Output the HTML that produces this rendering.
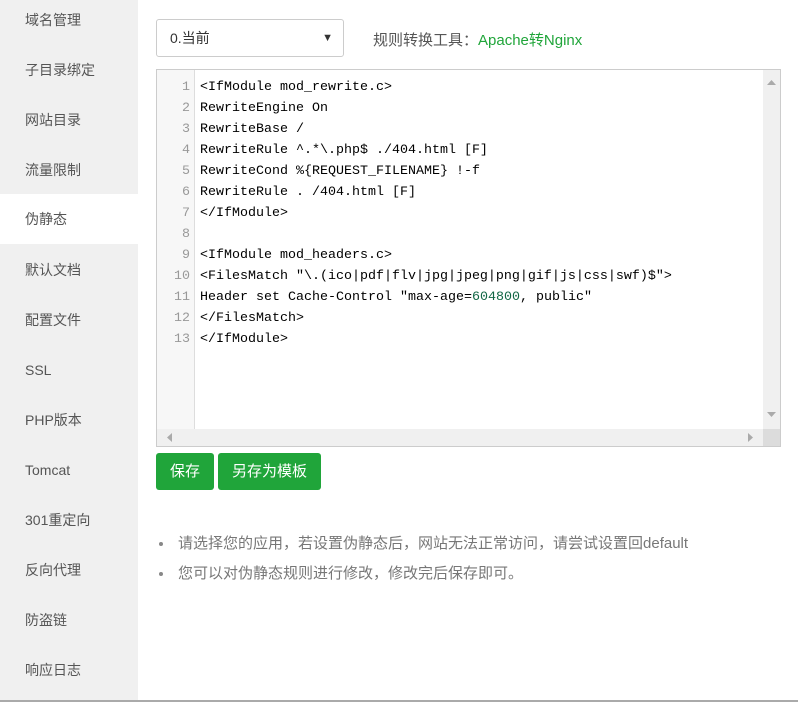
<!DOCTYPE html>
<html><head><meta charset="utf-8"><style>
*{margin:0;padding:0;box-sizing:border-box}
body{width:798px;height:702px;background:#fff;font-family:"Liberation Sans","Noto Sans CJK SC",sans-serif;position:relative;overflow:hidden}
.side{position:absolute;left:0;top:0;width:138px;height:700px;background:#f0f0f0}
.side div{position:absolute;left:0;width:138px;height:50px;line-height:50px;padding-left:25px;font-size:14px;color:#555}
.side div.act{background:#fff}
.bl{position:absolute;left:0;top:700px;width:798px;height:2px;background:#aaa}
.sel{position:absolute;left:156px;top:19px;width:188px;height:38px;border:1px solid #ccc;border-radius:3px;font-size:14px;color:#333;line-height:36px;padding-left:13px}
.sel span{position:absolute;right:10px;top:0;font-size:11px}
.tool{position:absolute;left:373px;top:29px;font-size:15px;color:#555}
.tool b{font-weight:normal;color:#20a53a}
.ed{position:absolute;left:156px;top:69px;width:625px;height:378px;border:1px solid #ccc;background:#fff}
.gut{position:absolute;left:0;top:0;width:38px;height:360px;background:#f7f7f7;border-right:1px solid #ddd}
.ln{position:absolute;left:0;width:33px;text-align:right;font:13.33px/21px "Liberation Mono",monospace;color:#999}
.cd{position:absolute;left:43px;top:7px;font:13.33px/21px "Liberation Mono",monospace;color:#000;white-space:pre}
.vs{position:absolute;right:0;top:0;width:17px;height:360px;background:#f0f0f0}
.hs{position:absolute;left:0;bottom:0;width:607px;height:17px;background:#f0f0f0}
.cr{position:absolute;right:0;bottom:0;width:17px;height:17px;background:#dcdcdc}
.btn{position:absolute;top:453px;height:37px;background:#20a53a;color:#fff;font-size:15px;line-height:37px;text-align:center;border-radius:3px}
.tips{position:absolute;left:156px;top:533px;font-size:15px;color:#777}
.tips div{height:30px;line-height:22px;position:relative;padding-left:22px}
.tips div:before{content:"";position:absolute;left:3px;top:9px;width:4px;height:4px;border-radius:50%;background:#888}
</style></head><body>
<div class="side">
<div style="top:-5px">域名管理</div>
<div style="top:45px">子目录绑定</div>
<div style="top:95px">网站目录</div>
<div style="top:145px">流量限制</div>
<div class="act" style="top:194px">伪静态</div>
<div style="top:245px">默认文档</div>
<div style="top:295px">配置文件</div>
<div style="top:345px">SSL</div>
<div style="top:395px">PHP版本</div>
<div style="top:445px">Tomcat</div>
<div style="top:495px">301重定向</div>
<div style="top:545px">反向代理</div>
<div style="top:595px">防盗链</div>
<div style="top:645px">响应日志</div>
</div>
<div class="bl"></div>
<div class="sel">0.当前<span>▼</span></div>
<div class="tool">规则转换工具：<b>Apache转Nginx</b></div>
<div class="ed">
<div class="gut"></div>
<div class="ln" style="top:7px">1<br>2<br>3<br>4<br>5<br>6<br>7<br>8<br>9<br>10<br>11<br>12<br>13</div>
<div class="cd">&lt;IfModule mod_rewrite.c&gt;
RewriteEngine On
RewriteBase /
RewriteRule ^.*\.php$ ./404.html [F]
RewriteCond %{REQUEST_FILENAME} !-f
RewriteRule . /404.html [F]
&lt;/IfModule&gt;

&lt;IfModule mod_headers.c&gt;
&lt;FilesMatch "\.(ico|pdf|flv|jpg|jpeg|png|gif|js|css|swf)$"&gt;
Header set Cache-Control "max-age=<span style="color:#164">604800</span>, public"
&lt;/FilesMatch&gt;
&lt;/IfModule&gt;</div>
<div class="vs"><svg width="17" height="360" style="position:absolute;left:0;top:0"><path d="M4 15L8.5 10L13 15Z" fill="#aaa"/><path d="M4 342L8.5 347L13 342Z" fill="#aaa"/></svg></div>
<div class="hs"><svg width="607" height="17" style="position:absolute;left:0;top:0"><path d="M15 4L10 8.5L15 13Z" fill="#aaa"/><path d="M591 4L596 8.5L591 13Z" fill="#aaa"/></svg></div>
<div class="cr"></div>
</div>
<div class="btn" style="left:156px;width:58px">保存</div>
<div class="btn" style="left:218px;width:103px">另存为模板</div>
<div class="tips">
<div>请选择您的应用，若设置伪静态后，网站无法正常访问，请尝试设置回default</div>
<div>您可以对伪静态规则进行修改，修改完后保存即可。</div>
</div>
</body></html>
